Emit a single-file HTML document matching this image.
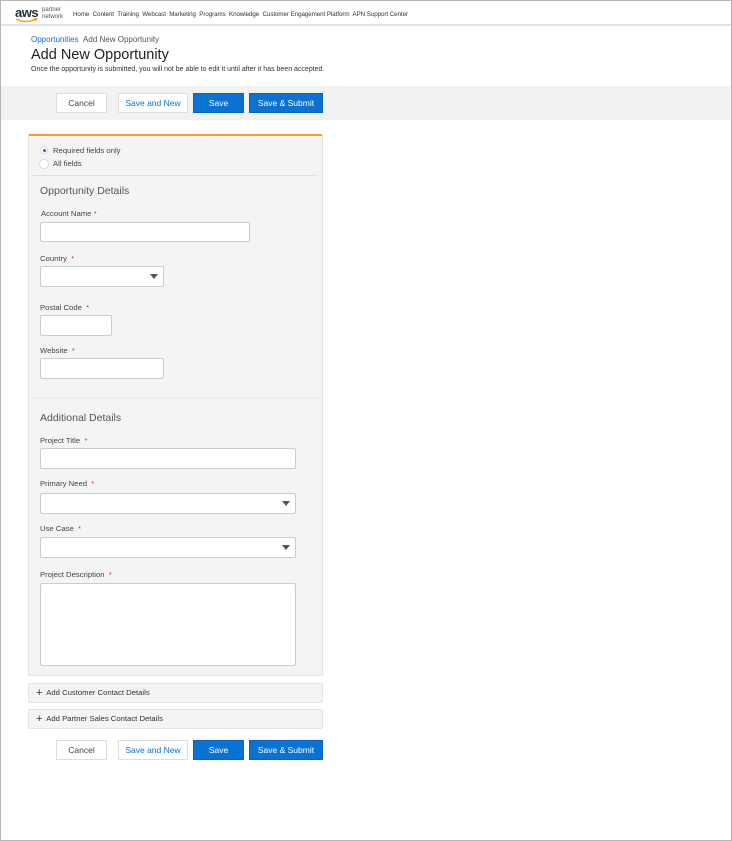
<!DOCTYPE html>
<html><head><meta charset="utf-8"><style>
*{box-sizing:border-box;margin:0;padding:0}
body{width:732px;height:841px;background:#fff;font-family:"Liberation Sans",sans-serif;position:relative;overflow:hidden;color:#333}
.a{position:absolute;white-space:nowrap}
.frame{position:absolute;left:0;top:0;width:732px;height:841px;border:1px solid #b5b5b5;pointer-events:none}
.btn{position:absolute;height:20px;font-size:8.5px;line-height:18px;text-align:center;border:1px solid #ddd;background:#fff;color:#444}
.btn.l{color:#0972d3}
.btn.p{background:#0972d3;border-color:#0864c0;color:#fff}
.lab{position:absolute;font-size:7.7px;color:#444}
.lab b{color:#d13212;font-weight:normal}
.inp{position:absolute;background:#fff;border:1px solid #ccc;border-radius:2px}
.tri{position:absolute;right:5px;top:7px;width:0;height:0;border-left:4.5px solid transparent;border-right:4.5px solid transparent;border-top:5px solid #555}
.h{position:absolute;font-size:10.5px;color:#555}
.col{position:absolute;left:28px;width:295px;height:20px;background:#f4f4f4;border:1px solid #e4e4e4;border-radius:2px;font-size:7.7px;line-height:18px;padding-left:7px;color:#333}
</style></head><body>
<div class="a" style="left:0;top:0;width:732px;height:26px;border-bottom:2px solid #e2e2e2"></div>
<div class="a" style="left:15px;top:5px;font-size:13px;font-weight:bold;color:#232f3e;letter-spacing:-0.5px">aws</div>
<svg class="a" style="left:15px;top:18px" width="24" height="6"><path d="M1 1 Q11 6 21 1" stroke="#f90" stroke-width="1.4" fill="none"/><path d="M19 0 L22 1 L20 3" stroke="#f90" stroke-width="1" fill="none"/></svg>
<div class="a" style="left:42px;top:7px;font-size:6px;line-height:6.5px;color:#555">partner<br>network</div>
<div class="a" style="left:73px;top:11px;font-size:6.2px;color:#333;letter-spacing:-0.05px">Home&nbsp; Content&nbsp; Training&nbsp; Webcast&nbsp; Marketing&nbsp; Programs&nbsp; Knowledge&nbsp; Customer Engagement Platform&nbsp; APN Support Center</div>
<div class="a" style="left:31px;top:35px;font-size:8px;color:#0972d3">Opportunities <span style="color:#555">&nbsp;Add New Opportunity</span></div>
<div class="a" style="left:31px;top:47px;font-size:14.5px;color:#222">Add New Opportunity</div>
<div class="a" style="left:31px;top:66px;font-size:7px;color:#333">Once the opportunity is submitted, you will not be able to edit it until after it has been accepted.</div>
<div class="a" style="left:1px;top:86px;width:730px;height:34px;background:#f2f2f2"></div>
<div class="btn" style="left:56px;top:93px;width:51px">Cancel</div>
<div class="btn l" style="left:118px;top:93px;width:70px">Save and New</div>
<div class="btn p" style="left:193px;top:93px;width:51px">Save</div>
<div class="btn p" style="left:249px;top:93px;width:74px">Save &amp; Submit</div>

<div class="a" style="left:28px;top:134px;width:295px;height:542px;background:#f4f4f4;border:1px solid #e4e4e4;border-top:2px solid #f0a030;border-radius:2px"></div>
<div class="a" style="left:40px;top:146px;width:8px;height:8px;border-radius:50%;background:#fff;border:1px solid #ddd"><div style="position:absolute;left:1.5px;top:1.5px;width:3px;height:3px;border-radius:50%;background:#0972d3"></div></div>
<div class="a" style="left:53px;top:146px;font-size:7.7px;color:#444">Required fields only</div>
<div class="a" style="left:39px;top:159px;width:10px;height:10px;border-radius:50%;background:#fff;border:1px solid #ddd"></div>
<div class="a" style="left:53px;top:159px;font-size:7.7px;color:#444">All fields</div>
<div class="a" style="left:31px;top:175px;width:287px;height:1px;background:#e2e2e2"></div>
<div class="h" style="left:40px;top:185px">Opportunity Details</div>
<div class="lab" style="left:41px;top:209px">Account Name <b>*</b></div>
<div class="inp" style="left:40px;top:222px;width:210px;height:20px"></div>
<div class="lab" style="left:40px;top:254px">Country &nbsp;<b>*</b></div>
<div class="inp" style="left:40px;top:266px;width:124px;height:21px"><div class="tri"></div></div>
<div class="lab" style="left:40px;top:303px">Postal Code &nbsp;<b>*</b></div>
<div class="inp" style="left:40px;top:315px;width:72px;height:21px"></div>
<div class="lab" style="left:40px;top:346px">Website &nbsp;<b>*</b></div>
<div class="inp" style="left:40px;top:358px;width:124px;height:21px"></div>
<div class="a" style="left:31px;top:397px;width:287px;height:1px;background:#e8e8e8"></div>
<div class="h" style="left:40px;top:412px">Additional Details</div>
<div class="lab" style="left:40px;top:436px">Project Title &nbsp;<b>*</b></div>
<div class="inp" style="left:40px;top:448px;width:256px;height:21px"></div>
<div class="lab" style="left:40px;top:479px">Primary Need &nbsp;<b>*</b></div>
<div class="inp" style="left:40px;top:493px;width:256px;height:21px"><div class="tri"></div></div>
<div class="lab" style="left:40px;top:524px">Use Case &nbsp;<b>*</b></div>
<div class="inp" style="left:40px;top:537px;width:256px;height:21px"><div class="tri"></div></div>
<div class="lab" style="left:40px;top:570px">Project Description &nbsp;<b>*</b></div>
<div class="inp" style="left:40px;top:583px;width:256px;height:83px"></div>

<div class="col" style="top:683px"><span style="font-size:11px;vertical-align:-1px">+</span>&nbsp; Add Customer Contact Details</div>
<div class="col" style="top:709px"><span style="font-size:11px;vertical-align:-1px">+</span>&nbsp; Add Partner Sales Contact Details</div>

<div class="btn" style="left:56px;top:740px;width:51px">Cancel</div>
<div class="btn l" style="left:118px;top:740px;width:70px">Save and New</div>
<div class="btn p" style="left:193px;top:740px;width:51px">Save</div>
<div class="btn p" style="left:249px;top:740px;width:74px">Save &amp; Submit</div>
<div class="frame"></div>
</body></html>
